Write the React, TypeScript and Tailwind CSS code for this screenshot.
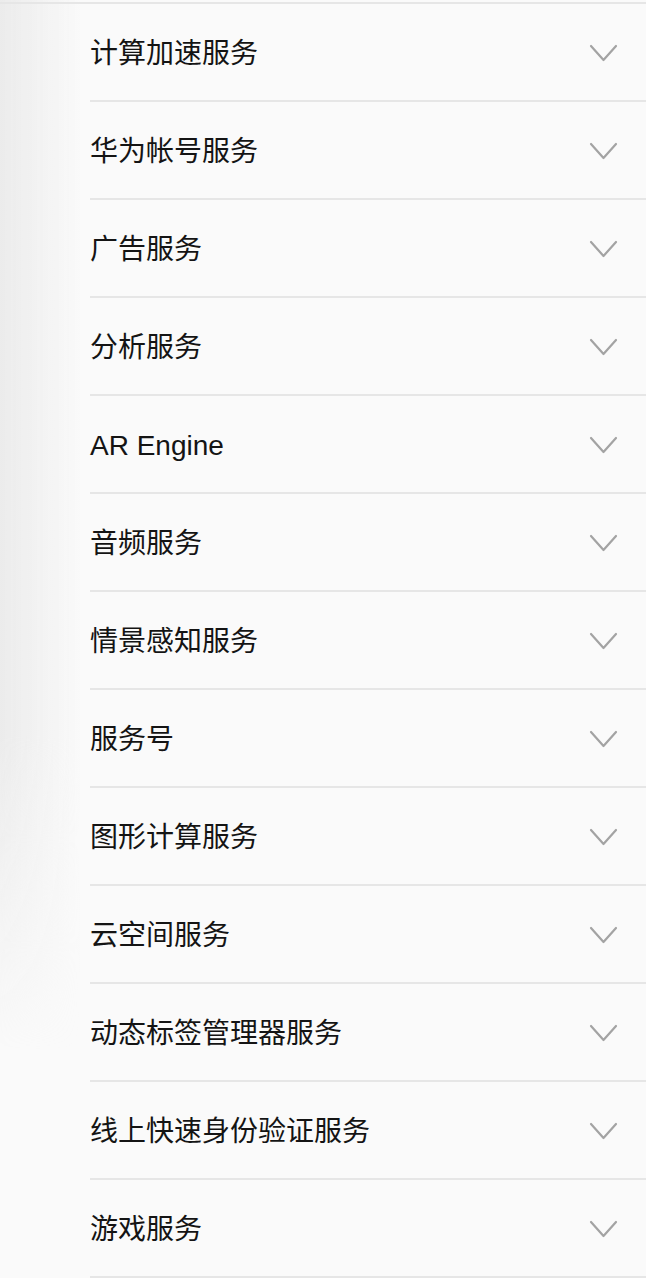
const services = [
    '计算加速服务',
    '华为帐号服务',
    '广告服务',
    '分析服务',
    'AR Engine',
    '音频服务',
    '情景感知服务',
    '服务号',
    '图形计算服务',
    '云空间服务',
    '动态标签管理器服务',
    '线上快速身份验证服务',
    '游戏服务',
]

const Chevron = () => (
    <svg width="29" height="19" viewBox="0 0 29 19" fill="none" className="mt-[2px] shrink-0">
        <path d="M2 2 L14.5 16 L27 2" stroke="#a3a3a3" strokeWidth="2.2" strokeLinecap="round" strokeLinejoin="round" />
    </svg>
)

const App = () => {
    return (
        <div className="relative min-h-[1278px] overflow-hidden bg-[#fafafa] pt-[2px] font-['Liberation_Sans','Noto_Sans_CJK_SC',sans-serif]">
            {/* soft shade along the left edge */}
            <div className="pointer-events-none absolute left-0 top-0 h-[1050px] w-[80px] bg-gradient-to-r from-[#ebebeb] to-transparent [mask-image:linear-gradient(to_bottom,black_70%,transparent)]" />

            <ul className="relative border-t-2 border-[#e6e6e6] pl-[90px]">
                {services.map((name) => (
                    <li
                        key={name}
                        className="flex h-[98px] items-center justify-between border-b-2 border-[#e6e6e6] pr-[28px]"
                    >
                        <span className="pt-[3px] text-[28px] leading-none text-[#141414]">{name}</span>
                        <Chevron />
                    </li>
                ))}
            </ul>
        </div>
    )
}

export default App
